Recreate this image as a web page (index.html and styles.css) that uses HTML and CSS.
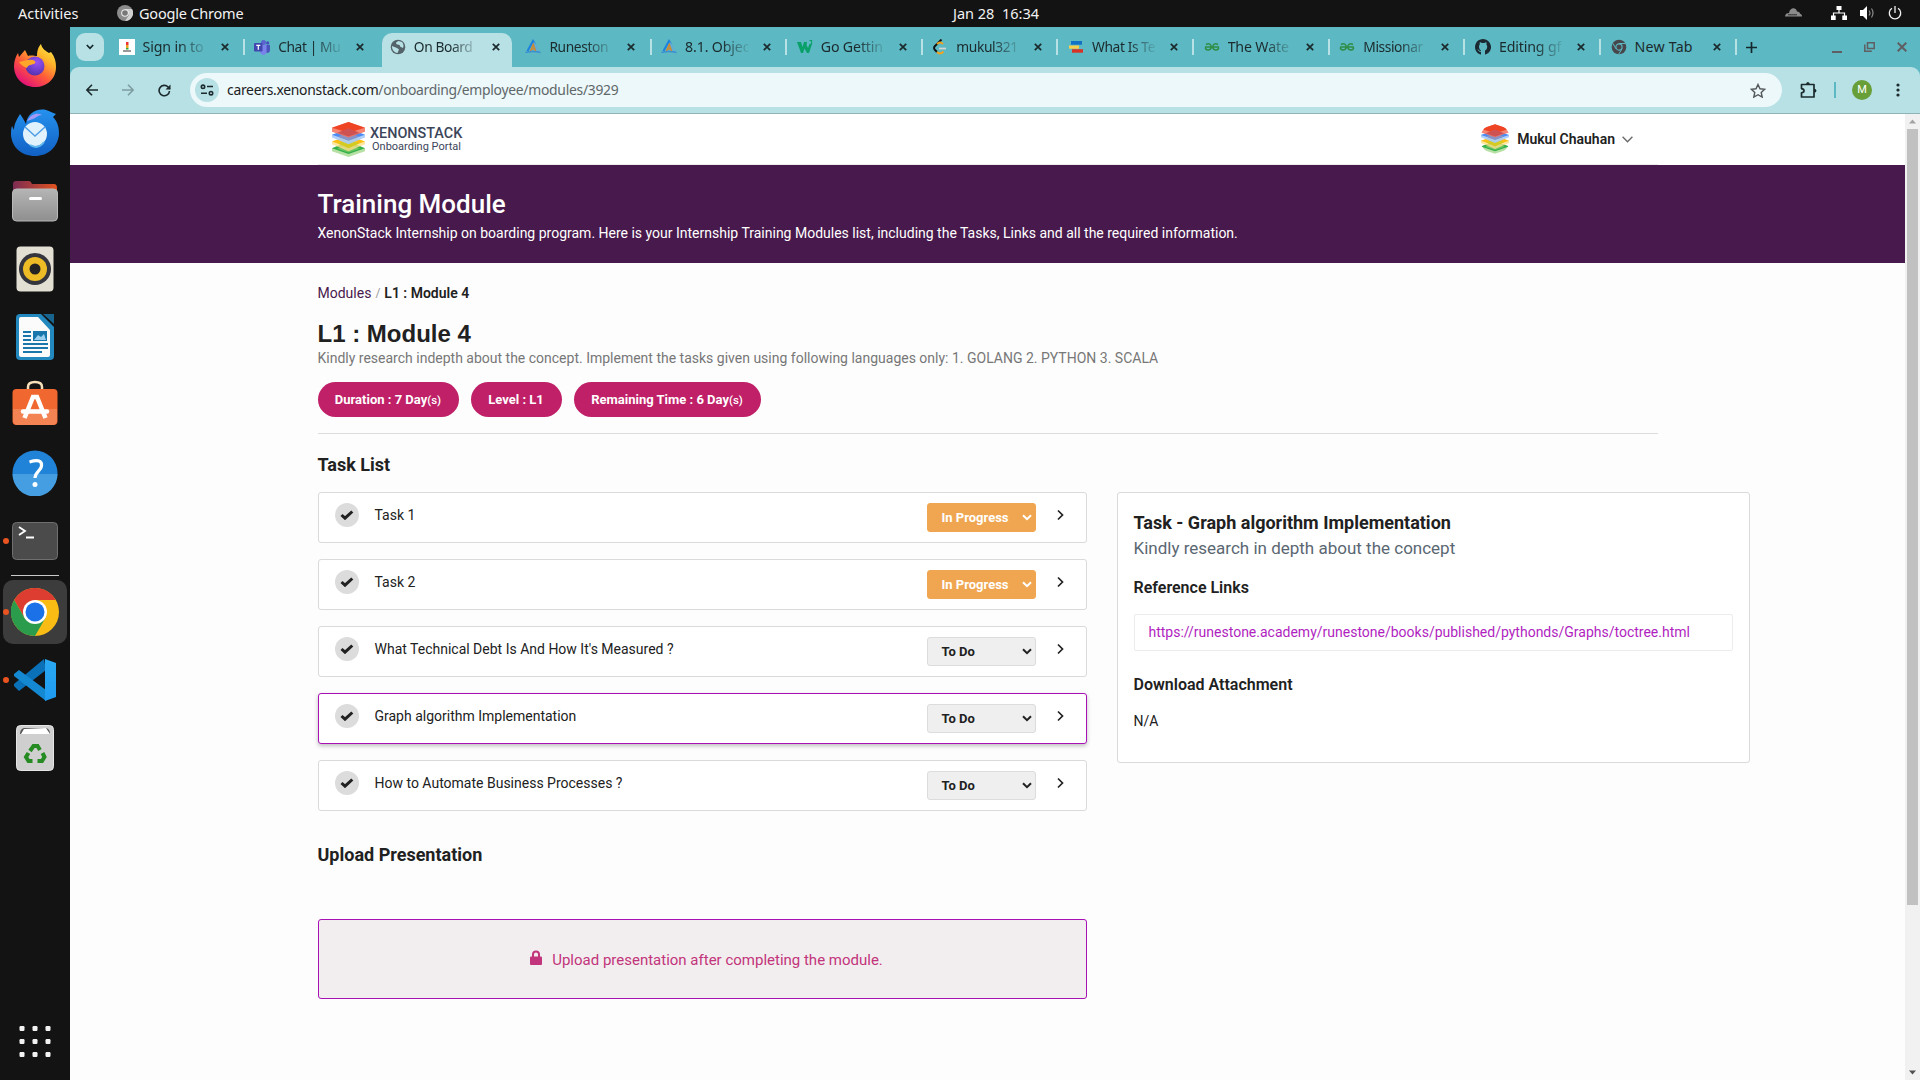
FILE: index.html
```html
<!DOCTYPE html>
<html lang="en">
<head>
<meta charset="utf-8">
<title>Onboarding Portal</title>
<link rel="stylesheet" href="styles.css">
</head>
<body>
<svg class="defs" width="0" height="0">
  <defs>
    <linearGradient id="ffo" x1="1" y1="0" x2="0.3" y2="1"><stop offset="0" stop-color="#fff44f"/><stop offset=".35" stop-color="#ffb52a"/><stop offset=".65" stop-color="#ff5a3a"/><stop offset="1" stop-color="#e2107a"/></linearGradient>
    <radialGradient id="ffp" cx=".6" cy=".3" r=".8"><stop offset="0" stop-color="#9a50f5"/><stop offset="1" stop-color="#4b2fa8"/></radialGradient>
    <linearGradient id="tb" x1="0" y1="0" x2="0" y2="1"><stop offset="0" stop-color="#2591ee"/><stop offset="1" stop-color="#1160c4"/></linearGradient>
    <linearGradient id="fol" x1="0" y1="0" x2="1" y2="0"><stop offset="0" stop-color="#7b2b53"/><stop offset="1" stop-color="#e2531f"/></linearGradient>
    <linearGradient id="grey" x1="0" y1="0" x2="0" y2="1"><stop offset="0" stop-color="#b5b5b5"/><stop offset="1" stop-color="#8f8f8f"/></linearGradient>
    <linearGradient id="vsr" x1="0" y1="0" x2="0" y2="1"><stop offset="0" stop-color="#2ba8f2"/><stop offset="1" stop-color="#1e9bf0"/></linearGradient>
    <symbol id="x" viewBox="0 0 8 8"><path d="M.8.8l6.4 6.4M7.2.8L.8 7.2" stroke="currentColor" stroke-width="1.7"/></symbol>
    <symbol id="stack" viewBox="0 0 34 36">
      <path d="M0 27l17-7 17 7v3l-17 6-17-6z" fill="#b7e0a4"/>
      <path d="M0 27l17-7 17 7-17 6z" fill="#34b04a"/><path d="M5 27.500l12-4.500 12 4.500-12 4z" fill="#6cc463"/>
      <path d="M0 20l17-6 17 6v3l-17 7-17-7z" fill="#ffe08a" opacity=".8"/><path d="M0 20l17-6 17 6-17 6z" fill="#fdbf16"/><path d="M6 22l11-4 11 4-11 5z" fill="#d4cb22"/>
      <path d="M0 13l17-6 17 6v3l-17 7-17-7z" fill="#a9ccfb" opacity=".9"/><path d="M0 13l17-6 17 6-17 6z" fill="#4b8df5"/><path d="M6 15l11-4 11 4-11 4z" fill="#8b93c4"/>
      <path d="M0 6l17-6 17 6v4l-17 6L0 10z" fill="#f4705c" opacity=".85"/><path d="M0 6l17-6 17 6-17 5z" fill="#ee4424"/><path d="M6 11l11-4.500L28 11l-11 4z" fill="#cf5252"/>
    </symbol>
    <symbol id="rune" viewBox="0 0 16 16"><path d="M2.500 12L8 2l2 3" fill="none" stroke="#1a82e0" stroke-width="2"/><path d="M9 3.500l4.500 9.500" stroke="#66a8d8" stroke-width="1.500"/><path d="M5.500 12l2.700-6.500L10.500 12M6.500 10h3" fill="none" stroke="#d08530" stroke-width="1.500"/><path d="M.5 13.500q7.500-2 15 0" fill="none" stroke="#3a8fd0" stroke-width="1.500"/></symbol>
    <symbol id="gfg" viewBox="0 0 16 16"><path d="M1 8h14M2 5.500C5 3.800 7.200 5.500 7.200 8c0 3.500-5.400 4-5.900.7M14 5.500C11 3.800 8.800 5.500 8.800 8c0 3.500 5.400 4 5.900.7" fill="none" stroke="#2f8d46" stroke-width="1.500"/></symbol>
    <symbol id="chev" viewBox="0 0 8 12"><path d="M1 1.500L5.500 6 1 10.500" fill="none" stroke="#212121" stroke-width="1.700"/></symbol>
    <symbol id="check" viewBox="0 0 14 10"><path d="M1.500 5l3.500 3.200L12.300 1.500" fill="none" stroke="#212121" stroke-width="3"/></symbol>
    <symbol id="caret" viewBox="0 0 10 7"><path d="M1 1.200l4 4 4-4" fill="none" stroke="currentColor" stroke-width="2"/></symbol>
  </defs>
</svg>

<div class="desktop">
  <header class="topbar">
    <span class="activities">Activities</span>
    <svg class="appico" width="16" height="16" viewBox="0 0 16 16"><circle cx="8" cy="8" r="8" fill="#8c8c8c"/><path d="M8 4h7a8 8 0 0 1-7 12l4-6z" fill="#d0d0d0"/><circle cx="8" cy="8" r="3.800" fill="#eee"/><circle cx="8" cy="8" r="2.800" fill="#777"/></svg>
    <span class="appname">Google Chrome</span>
    <span class="clock">Jan 28&nbsp; 16:34</span>
    <div class="tray">
      <svg width="17" height="9" viewBox="0 0 17 9"><path d="M0 8.500C0 6 2 5 4 5c1-6 7-6 8-1.500 2 0 3 1 3 2.300 1 0 2 1 2 2.700z" fill="#8b8b8b"/><path d="M3 6.800h9" stroke="#131313" stroke-width=".8"/></svg>
      <svg width="16" height="14" viewBox="0 0 16 14"><path d="M5.500 0h5v4h-5zM0 9.500h4.700V14H0zM11.300 9.500H16V14h-4.700z" fill="#fff"/><path d="M8 4v3M2.500 10V7h11v3" fill="none" stroke="#fff" stroke-width="1.200"/></svg>
      <svg width="15" height="14" viewBox="0 0 15 14"><path d="M0 4h3l4-4v14l-4-4H0z" fill="#fff"/><path d="M9 4.500q2 2.500 0 5M11.500 2.500q3 4.500 0 9" fill="none" stroke="#8b8b8b" stroke-width="1.200"/></svg>
      <svg width="14" height="14" viewBox="0 0 14 14"><path d="M4 2.300a5.700 5.700 0 1 0 6 0M7 0v7" fill="none" stroke="#f2f2f2" stroke-width="1.300"/></svg>
    </div>
  </header>

  <div class="below">
    <nav class="dock">
      <div class="slot first"><svg width="44" height="46" viewBox="0 0 44 46"><path d="M22 45C10 45 1 36 1 24c0-5 2-10 4-13l1 4 6-7 3 6c3-1 7 0 9 0 0-6 2-10 4-12 1 5 5 7 8 9l2-1c4 5 5 10 5 15C43 37 34 45 22 45z" fill="url(#ffo)"/><circle cx="22" cy="24" r="9.500" fill="url(#ffp)"/><path d="M6 20c6-1 9-3 14-2 3 1 3 3 1 4-4 1-6 1-7 4-3-1-6-3-8-6z" fill="#ffa62b"/></svg></div>
      <div class="slot"><svg width="48" height="48" viewBox="0 0 48 48"><path d="M9 5c3 4 5 8 6 10C16 5 25-1 35 1c4 1 6 3 10 4l-3 3c5 5 6 11 6 17-1 13-11 22-24 22C10 47 1 38 0 26c0-4 0-6 1-9l2 4c0-6 3-11 6-16z" fill="url(#tb)"/><path d="M16 12C20 5 26 3 31 6c-4 0-6 3-9 4z" fill="#a49af6"/><circle cx="24" cy="25" r="12" fill="#e2f2fd"/><path d="M14 18l10 9 10-9" fill="none" stroke="#4f9fe6" stroke-width="1.500"/><path d="M19 36q8 5 14-3" fill="none" stroke="#62b9ee" stroke-width="2"/></svg></div>
      <div class="slot"><svg width="46" height="42" viewBox="0 0 46 42"><path d="M1 4q0-3 3-3h13q2 0 3 3h22q3 0 3 4v8H1z" fill="url(#fol)"/><rect x=".5" y="9" width="45" height="32" rx="4" fill="url(#grey)" stroke="#b9b9b9"/><rect x="17" y="17" width="13" height="3" rx="1.500" fill="#fff"/></svg></div>
      <div class="slot"><svg width="38" height="46" viewBox="0 0 38 46"><rect x=".5" y=".5" width="37" height="45" rx="4" fill="#e3dfd3"/><circle cx="19" cy="23" r="16" fill="#34353d"/><circle cx="19" cy="23" r="12" fill="#ecbb25"/><circle cx="19" cy="23" r="5.500" fill="#232323"/></svg></div>
      <div class="slot"><svg width="38" height="46" viewBox="0 0 38 46"><path d="M4 0h21l13 13v29q0 4-4 4H4q-4 0-4-4V4q0-4 4-4z" fill="#2388bd"/><path d="M27 0h11v10z" fill="#17648f"/><path d="M5 3h17l12 13v25q0 2-2 2H5q-2 0-2-2V5q0-2 2-2z" fill="#fbfbfb"/><path d="M7 18h8M7 22h8M7 26h8M7 30h25M7 34h25M7 38h19" stroke="#1977ab" stroke-width="2"/><rect x="17" y="17" width="14" height="10" fill="#1977ab"/><path d="M18 26l4-5 3 2 3-3 2 6z" fill="#9bd1ee"/></svg></div>
      <div class="slot soft"><svg width="46" height="46" viewBox="0 0 46 46"><path d="M16 11V7q0-5 7-5t7 5v4" fill="none" stroke="#f6dfb9" stroke-width="2.500"/><rect x=".5" y="9" width="45" height="36" rx="4" fill="#f0672f"/><path d="M1 29h44v11q0 5-5 5H6q-5 0-5-5z" fill="#f48354"/><path d="M12.500 38l8.500-21h4l8.500 21" fill="none" stroke="#fff" stroke-width="4.500"/><path d="M11 31.500h24" stroke="#fff" stroke-width="4.500" stroke-linecap="round"/></svg></div>
      <div class="slot"><svg width="46" height="46" viewBox="0 0 46 46"><circle cx="23" cy="23" r="22.500" fill="#2083d8"/><path d="M.5 24h45a22.500 22.500 0 0 1-45 0z" fill="#459ee2"/><path d="M17.500 12q13-4 12 4c-.5 5-6 5-6.500 12" fill="none" stroke="#fff" stroke-width="3.200"/><circle cx="23" cy="34.500" r="2.500" fill="#fff"/></svg></div>
      <div class="slot run"><svg width="46" height="38" viewBox="0 0 46 38"><rect x=".5" y=".5" width="45" height="37" rx="4" fill="#4b4b4b" stroke="#6f6f6f"/><path d="M7 5l6 4-6 4M14 15.500h8" fill="none" stroke="#fff" stroke-width="1.800"/></svg></div>
      <div class="rule"></div>
      <div class="slot run current"><svg width="48" height="48" viewBox="0 0 48 48"><circle cx="24" cy="24" r="24" fill="#f9bc15"/><path d="M3.200 12A24 24 0 0 1 44.800 12H24L13.600 30z" fill="#dd3c31"/><path d="M3.200 12A24 24 0 0 0 24 48l10.400-18H13.600z" fill="#2a9c4b"/><circle cx="24" cy="24" r="12" fill="#fff"/><circle cx="24" cy="24" r="9.500" fill="#1b72e8"/></svg></div>
      <div class="slot run"><svg width="42" height="42" viewBox="0 0 42 42"><path d="M32 11L5 32l-5-5v-2L30 0z" fill="#0a70b7"/><path d="M0 15l5-4 27 20v11L0 17z" fill="#1489d2"/><path d="M31 0l11 4v34l-11 4z" fill="url(#vsr)"/></svg></div>
      <div class="slot"><svg width="38" height="46" viewBox="0 0 38 46"><rect x=".5" y=".5" width="37" height="45" rx="4" fill="#cfcfcf" stroke="#e6e6e6"/><path d="M4 9q0-5 4-6h22q4 1 4 6z" fill="#555"/><path d="M5 9l3-5 22-1 4 6z" fill="#fff"/><g fill="none" stroke="#258b22" stroke-width="4"><path d="M14 26l3.500-5h4l2.500 4"/><path d="M26.500 28l2 4-2.500 4h-4.500"/><path d="M16.500 36h-4L10 32l2.500-4"/></g></svg></div>
      <svg class="grid" width="32" height="32" viewBox="0 0 32 32" fill="#f2f2f2"><rect x=".5" width="5" height="5" rx="1.200"/><rect x="13.500" width="5" height="5" rx="1.200"/><rect x="26.500" width="5" height="5" rx="1.200"/><rect x=".5" y="13" width="5" height="5" rx="1.200"/><rect x="13.500" y="13" width="5" height="5" rx="1.200"/><rect x="26.500" y="13" width="5" height="5" rx="1.200"/><rect x=".5" y="26" width="5" height="5" rx="1.200"/><rect x="13.500" y="26" width="5" height="5" rx="1.200"/><rect x="26.500" y="26" width="5" height="5" rx="1.200"/></svg>
    </nav>

    <div class="browser">
      <div class="tabstrip">
        <div class="tabsearch"><svg width="8" height="6" viewBox="0 0 8 6"><path d="M.8 1L4 4.300 7.200 1" fill="none" stroke="#15282b" stroke-width="1.700"/></svg></div>
        <div class="tabs">
          <div class="tab"><svg class="fav" viewBox="0 0 16 16"><path d="M0 0h16v16H0z" fill="#fff"/><path d="M7 3h2.500v3H7z" fill="#e33"/><path d="M7 6h2.500v3H7z" fill="#eea320"/><path d="M7 9h2.500v1.500H7z" fill="#3a3"/><path d="M4 12h8" stroke="#777" stroke-width="1.500"/></svg><span class="t">Sign in to</span><svg class="x"><use href="#x"/></svg></div>
          <div class="tab"><svg class="fav" viewBox="0 0 16 16"><circle cx="9.500" cy="3.500" r="2.500" fill="#5b63d0"/><circle cx="13.700" cy="4" r="1.700" fill="#4852bd"/><path d="M6 6h7v6q-1 4-4 4-3-1-3-4z" fill="#7b83eb"/><path d="M12.500 6H16v5q0 3-3.500 3z" fill="#4b53bc"/><rect y="4" width="8.500" height="8.500" rx="1" fill="#4048b0"/><path d="M2.300 6.300h4M4.300 6.300v4.500" stroke="#fff" stroke-width="1.200"/></svg><span class="t tight">Chat | Mu</span><svg class="x"><use href="#x"/></svg></div>
          <div class="tab active"><svg class="fav" viewBox="0 0 16 16"><circle cx="8" cy="8" r="7.300" fill="#54636a"/><path d="M8.500 2c-3 1-3 3-1 3.500s3 .5 2.500 2L13 9c1-2 .5-4-1-6zM2 7l5 2 2 1.500-1.500 3.500C4 13.500 2 11 2 7z" fill="#b8e1e5"/></svg><span class="t tight">On Board</span><svg class="x"><use href="#x"/></svg></div>
          <div class="tab"><svg class="fav"><use href="#rune"/></svg><span class="t tight">Runeston</span><svg class="x"><use href="#x"/></svg></div>
          <div class="tab"><svg class="fav"><use href="#rune"/></svg><span class="t">8.1. Objec</span><svg class="x"><use href="#x"/></svg></div>
          <div class="tab"><svg class="fav" viewBox="0 0 16 16"><path d="M0 3h4l1.500 5L7 3h3l-.5 3L11 9l1.500-4H15l-3 9h-2L7.500 9.500 6 14H4z" fill="#0aa06a"/><path d="M12.500 1.500H15L14 3q1.500.5.500 2l-1.500.3" fill="none" stroke="#0aa06a"/></svg><span class="t">Go Gettin</span><svg class="x"><use href="#x"/></svg></div>
          <div class="tab"><svg class="fav" viewBox="0 0 16 16"><path d="M9.500.5L3 7q-2 2 0 4l2 2" fill="none" stroke="#111" stroke-width="1.900"/><path d="M5 5q3-3 6 0M5 13q3 3 6.500-.5" fill="none" stroke="#f3a21b" stroke-width="1.900"/><path d="M7 9.500h7" stroke="#d5d5d5" stroke-width="1.700"/></svg><span class="t tight">mukul321</span><svg class="x"><use href="#x"/></svg></div>
          <div class="tab"><svg class="fav" viewBox="0 0 16 16"><rect x="3" y="2" width="11" height="3.700" fill="#1272c5"/><rect x="1" y="6.500" width="10" height="3.200" fill="#fad04a"/><rect x="4" y="10.200" width="11" height="3.500" fill="#d83227"/></svg><span class="t tight">What Is Te</span><svg class="x"><use href="#x"/></svg></div>
          <div class="tab"><svg class="fav"><use href="#gfg"/></svg><span class="t">The Wate</span><svg class="x"><use href="#x"/></svg></div>
          <div class="tab"><svg class="fav"><use href="#gfg"/></svg><span class="t tight">Missionar</span><svg class="x"><use href="#x"/></svg></div>
          <div class="tab"><svg class="fav" viewBox="0 0 16 16"><path d="M8 0C3.600 0 0 3.600 0 8c0 3.500 2.300 6.500 5.500 7.600.4.100.5-.2.500-.4V11.500C5.200 11 4 9.700 4 7.500c0-.9.300-1.600.8-2.100-.1-.2-.4-1 .1-2.100 0 0 .7-.2 2.200.8a7.500 7.500 0 0 1 2 0c1.500-1 2.200-.8 2.200-.8.400 1.100.2 1.900.1 2.100.5.600.8 1.300.8 2.100 0 2.200-1 3.500-2.200 4v3.700c0 .2.100.5.500.4A8 8 0 0 0 8 0z" fill="#1b2a32"/><path d="M3 10.500q1 2.300 3 2.200" fill="none" stroke="#5cb8c2" stroke-width=".9"/></svg><span class="t">Editing gf</span><svg class="x"><use href="#x"/></svg></div>
          <div class="tab"><svg class="fav" viewBox="0 0 16 16"><circle cx="8" cy="8" r="7.300" fill="#47474b"/><circle cx="8" cy="8" r="3.100" fill="none" stroke="#5cb8c2" stroke-width="1.100"/><path d="M8 4.500h6.500M5 9.800L2 4.500M11 9.800l-3.300 5.500" stroke="#5cb8c2"/></svg><span class="t full">New Tab</span><svg class="x"><use href="#x"/></svg></div>
        </div>
        <svg class="plus" width="11" height="11" viewBox="0 0 11 11"><path d="M5.500 0v11M0 5.500h11" stroke="#15282b" stroke-width="1.700"/></svg>
        <div class="winbtns">
          <svg width="10" height="12" viewBox="0 0 10 12"><path d="M0 11h10" stroke="#5f5f63" stroke-width="2"/></svg>
          <svg width="11" height="10" viewBox="0 0 11 10"><path d="M3.500.8h6.700v5.700H3.500zM.8 2.500v6.700h7" fill="none" stroke="#5f5f63" stroke-width="1.500"/></svg>
          <svg width="10" height="10" viewBox="0 0 10 10"><path d="M.7.7l8.600 8.600M9.300.7L.7 9.300" stroke="#5f5f63" stroke-width="2"/></svg>
        </div>
      </div>

      <div class="toolbar">
        <svg width="12" height="12" viewBox="0 0 12 12"><path d="M6 .8L.9 6 6 11.200M1 6h11" fill="none" stroke="#1b2a2d" stroke-width="1.600"/></svg>
        <svg width="12" height="12" viewBox="0 0 12 12"><path d="M6 .8L11.100 6 6 11.200M11 6H0" fill="none" stroke="#7e9da1" stroke-width="1.600"/></svg>
        <svg width="13" height="13" viewBox="0 0 13 13"><path d="M11.500 7a5.200 5.200 0 1 1-1.400-4L12 4.800" fill="none" stroke="#1b2a2d" stroke-width="1.600"/><path d="M12.500.5v5h-5z" fill="#1b2a2d"/></svg>
        <div class="omnibox">
          <div class="site"><svg width="14" height="12" viewBox="0 0 14 12"><g fill="none" stroke="#1b2a2d" stroke-width="1.600"><circle cx="3" cy="2.800" r="1.700"/><path d="M7 2.500h6M1 9.300h6"/><circle cx="11" cy="9.200" r="1.700"/></g></svg></div>
          <span class="url">careers.xenonstack.com<span>/onboarding/employee/modules/3929</span></span>
          <svg class="star" width="16" height="15" viewBox="0 0 16 15"><path d="M8 1.500l2 4.300 4.700.5-3.500 3.200 1 4.600L8 11.700l-4.200 2.400 1-4.600L1.300 6.300 6 5.800z" fill="none" stroke="#54585a" stroke-width="1.400"/></svg>
        </div>
        <svg class="ext" width="17" height="17" viewBox="0 0 17 17"><path d="M1.500 3.500H14V16H1.500v-4.200q2.500-.3 2.500-2.100T1.500 7.600z" fill="none" stroke="#1b2a2d" stroke-width="1.700" stroke-linejoin="round"/><path d="M6 3.500q0-2.500 1.900-2.500t1.900 2.500zM14 7.800q2.500 0 2.500 1.900T14 11.600z" fill="#1b2a2d"/></svg>
        <div class="tdiv"></div>
        <div class="me">M</div>
        <svg class="dots" width="4" height="14" viewBox="0 0 4 14" fill="#1b2a2d"><circle cx="2" cy="2" r="1.600"/><circle cx="2" cy="7" r="1.600"/><circle cx="2" cy="12" r="1.600"/></svg>
      </div>

      <div class="viewport">
        <div class="page">
          <div class="sitehead">
            <svg class="logo" width="33" height="35"><use href="#stack"/></svg>
            <div class="brand"><b>XENONSTACK</b><span>Onboarding Portal</span></div>
            <div class="user"><div class="avatar"><svg width="28" height="30"><use href="#stack"/></svg></div><span>Mukul Chauhan</span><svg width="11" height="7" viewBox="0 0 11 7"><path d="M.6.700l4.900 5 4.900-5" fill="none" stroke="#6a6a6a" stroke-width="1.400"/></svg></div>
          </div>
          <div class="banner"><h2>Training Module</h2><p>XenonStack Internship on boarding program. Here is your Internship Training Modules list, including the Tasks, Links and all the required information.</p></div>
          <main>
            <div class="crumbs"><a>Modules</a><i>/</i><b>L1 : Module 4</b></div>
            <h1>L1 : Module 4</h1>
            <p class="desc">Kindly research indepth about the concept. Implement the tasks given using following languages only: 1. GOLANG 2. PYTHON 3. SCALA</p>
            <div class="pills"><span class="p1">Duration : 7 Day<small>(s)</small></span><span class="p2">Level : L1</span><span class="p3">Remaining Time : 6 Day<small>(s)</small></span></div>
            <hr>
            <h3 class="tl">Task List</h3>
            <div class="cols">
              <div class="left">
                <div class="task"><div class="ck"><svg width="14" height="10"><use href="#check"/></svg></div><span>Task 1</span><div class="sel prog">In Progress<svg width="10" height="7"><use href="#caret"/></svg></div><svg class="go"><use href="#chev"/></svg></div>
                <div class="task"><div class="ck"><svg width="14" height="10"><use href="#check"/></svg></div><span>Task 2</span><div class="sel prog">In Progress<svg width="10" height="7"><use href="#caret"/></svg></div><svg class="go"><use href="#chev"/></svg></div>
                <div class="task"><div class="ck"><svg width="14" height="10"><use href="#check"/></svg></div><span>What Technical Debt Is And How It's Measured ?</span><div class="sel">To Do<svg width="10" height="7"><use href="#caret"/></svg></div><svg class="go"><use href="#chev"/></svg></div>
                <div class="task on"><div class="ck"><svg width="14" height="10"><use href="#check"/></svg></div><span>Graph algorithm Implementation</span><div class="sel">To Do<svg width="10" height="7"><use href="#caret"/></svg></div><svg class="go"><use href="#chev"/></svg></div>
                <div class="task"><div class="ck"><svg width="14" height="10"><use href="#check"/></svg></div><span>How to Automate Business Processes ?</span><div class="sel">To Do<svg width="10" height="7"><use href="#caret"/></svg></div><svg class="go"><use href="#chev"/></svg></div>
                <h3 class="up">Upload Presentation</h3>
                <div class="upload"><svg width="12" height="15" viewBox="0 0 12 15"><path d="M3 7V4.500q0-3 3-3t3 3V7" fill="none" stroke="#c2347b" stroke-width="2"/><rect y="6.500" width="12" height="8.500" rx="1" fill="#c2347b"/></svg><span>Upload presentation after completing the module.</span></div>
              </div>
              <aside class="detail">
                <h3>Task - Graph algorithm Implementation</h3>
                <p class="sub">Kindly research in depth about the concept</p>
                <h4 class="ref">Reference Links</h4>
                <a class="link">https://runestone.academy/runestone/books/published/pythonds/Graphs/toctree.html</a>
                <h4 class="dl">Download Attachment</h4>
                <p class="na">N/A</p>
              </aside>
            </div>
          </main>
        </div>
        <div class="scroll"><svg width="15" height="15" viewBox="0 0 15 15"><path d="M4 9.500h7l-3.500-4z" fill="#a3a3a3"/></svg><div class="thumb"></div><svg class="dn" width="15" height="15" viewBox="0 0 15 15"><path d="M4 5.500h7l-3.500 4z" fill="#505050"/></svg></div>
      </div>
    </div>
  </div>
</div>
</body>
</html>
```

FILE: styles.css
```css
* { box-sizing: border-box; margin: 0; padding: 0; }
body { background: #131313; overflow: hidden; font-family: Roboto, "Liberation Sans", sans-serif; color: #212121; }
svg { display: block; flex: none; }
.defs { position: absolute; }
.desktop { width: 1920px; height: 1080px; display: flex; flex-direction: column; }

/* system bar */
.topbar { height: 27px; flex: none; display: grid; grid-template-columns: 99px 22px 814px 120px 1fr; padding: 0 0 2px 18px; align-items: center; color: #f2f2f2; font: 14.500px/24px "Noto Sans", sans-serif; white-space: nowrap; }
.appname { letter-spacing: -.2px; }
.tray { display: flex; align-items: center; justify-content: flex-end; gap: 13px; padding-right: 18px; }
.tray svg:first-child { margin-right: 16px; }

.below { flex: 1; display: flex; min-height: 0; }
.dock { width: 70px; flex: none; display: flex; flex-direction: column; padding-top: 3px; position: relative; align-items: center; }
.slot { width: 70px; height: 68px; flex: none; display: flex; align-items: center; justify-content: center; position: relative; }
.first { height: 69px; }
.soft { padding-bottom: 4px; }
.rule { width: 48px; height: 1px; background: #c9c9c9; margin: 0 0 2px; flex: none; }
.current { width: 64px; height: 64px; margin: 2px 0; background: #3c3c3c; border-radius: 10px; }
.run::before { content: ""; position: absolute; left: 3px; top: 50%; width: 6px; height: 6px; margin-top: -3px; border-radius: 50%; background: #e95420; }
.current::before { left: 0; }
.grid { margin: auto 0 22px; }

/* browser chrome */
.browser { flex: 1; display: flex; flex-direction: column; min-width: 0; background: #5cb8c2; }
.tabstrip { height: 40px; display: flex; align-items: center; flex: none; padding-left: 6px; }
.tabsearch { width: 28px; height: 28px; margin-right: 4px; border-radius: 9px; background: #b8e1e5; display: flex; align-items: center; justify-content: center; }
.tabs { display: flex; height: 40px; }
.tab { width: 135.650px; height: 40px; display: flex; align-items: center; padding-left: 10.500px; position: relative; color: #1b2a2d; }
.tab::after { content: ""; position: absolute; right: -1px; top: 12px; width: 2px; height: 16px; background: #b8e1e5; }
.tab.active::after, .tab:nth-child(2)::after { display: none; }
.active::before { content: ""; position: absolute; left: 3px; right: 3px; top: 6px; bottom: 0; background: #b8e1e5; border-radius: 10px 10px 0 0; }
.active > * { position: relative; }
.fav { width: 16px; height: 16px; margin-right: 8px; }
.t { width: 66px; height: 20px; flex: none; overflow: hidden; white-space: nowrap; font: 14.200px/20px "Noto Sans", sans-serif; letter-spacing: -.15px; -webkit-mask-image: linear-gradient(90deg, #000 55%, transparent 100%); mask-image: linear-gradient(90deg, #000 55%, transparent 100%); }
.tight { font-size: 13.800px; letter-spacing: -.4px; }
.t.full { -webkit-mask-image: none; mask-image: none; letter-spacing: .2px; }
.x { width: 8px; height: 8px; margin-left: 12px; }
.plus { margin-left: 10px; }
.winbtns { margin-left: auto; display: flex; align-items: center; gap: 22px; padding-right: 13px; }
.toolbar { height: 47px; flex: none; background: #b8e1e5; border-radius: 9px 9px 0 0; border-bottom: 1px solid #8fb3b7; display: flex; align-items: center; padding: 0 20px 0 16px; }
.toolbar > svg:nth-child(2) { margin-left: 24px; }
.toolbar > svg:nth-child(3) { margin-left: 24px; }
.omnibox { flex: none; width: 1592px; height: 34px; margin-left: 19px; border-radius: 17px; background: #ecf8f9; display: flex; align-items: center; padding-left: 5px; }
.site { width: 24px; height: 24px; border-radius: 50%; background: #b8e1e5; display: flex; align-items: center; justify-content: center; }
.url { margin-left: 8px; font: 13.900px/20px "Noto Sans", sans-serif; letter-spacing: -.28px; color: #1b2022; white-space: nowrap; }
.url span { color: #5f6769; }
.star { margin-left: auto; margin-right: 16px; }
.ext { margin-left: 18px; margin-top: -2px; }
.tdiv { width: 2px; height: 16px; background: #5cb8c2; margin: 0 16px 0 17px; }
.me { width: 20px; height: 20px; border-radius: 50%; background: #689f38; color: #fff; font-size: 11px; line-height: 20px; text-align: center; }
.dots { margin-left: 24px; }

.viewport { flex: 1; display: flex; min-height: 0; background: #fdfdfd; }
.page { flex: 1; min-width: 0; }
.scroll { width: 15px; background: #f1f1f1; display: flex; flex-direction: column; align-items: center; }
.thumb { width: 11px; height: 776px; background: #c1c1c1; }
.dn { margin-top: auto; }

/* portal header */
.sitehead { height: 51px; background: #fff; padding: 0 272px 1px 262px; display: flex; align-items: center; background-image: linear-gradient(#ececec, #ececec); background-size: 1340px 1px; background-position: 248px 50px; background-repeat: no-repeat; }
.brand { margin-left: 5px; padding-top: 1px; display: flex; flex-direction: column; color: #3b4559; }
.brand b { font-size: 14.400px; line-height: 15px; font-weight: 500; }
.brand span { font-size: 11px; line-height: 12px; padding-left: 2px; }
.user { margin-left: auto; display: flex; align-items: center; font-size: 14px; line-height: 16px; font-weight: 600; }
.avatar { width: 30px; height: 30px; border-radius: 50%; overflow: hidden; display: flex; justify-content: center; margin-right: 7px; background: #fff; }
.user > svg { margin-left: 7px; }

.banner { height: 98px; background: #48194c; color: #fff; padding: 24px 0 0 247.500px; }
.banner h2 { font-size: 26px; line-height: 30px; font-weight: 500; }
.banner p { font-size: 14px; line-height: 20px; margin-top: 4px; }

main { padding: 20px 0 0 247.500px; }
.crumbs { font-size: 14px; line-height: 20px; display: flex; }
.crumbs a { color: #48194c; }
.crumbs i { font-style: normal; font-size: 12px; color: #999; margin: 0 4px; }
.crumbs b { font-weight: 600; }
h1 { font: bold 24px/28px "Liberation Sans", sans-serif; margin-top: 17px; }
.desc { font-size: 14px; line-height: 20px; color: #777; }
.pills { display: flex; gap: 12px; margin-top: 14px; }
.pills span { height: 35px; border-radius: 18px; background: #bf2067; color: #fff; font-size: 13px; font-weight: 700; line-height: 35px; text-align: center; }
.pills small { font-size: 11.500px; font-weight: 500; }
.p1 { width: 141px; } .p2 { width: 91px; } .p3 { width: 187px; }
hr { border: 0; height: 1px; background: #dcdcdc; width: 1340px; margin-top: 16px; }
h3 { font-size: 18px; line-height: 24px; font-weight: 700; }
.tl { margin-top: 19px; }
.cols { display: flex; gap: 30px; margin-top: 15px; align-items: flex-start; }
.left { width: 769px; }
.task { height: 51px; border: 1px solid #dadada; border-radius: 3px; background: #fff; display: flex; align-items: flex-start; padding: 10px 21px 0 16px; font-size: 14px; }
.task + .task { margin-top: 16px; }
.task.on { border-color: #a811b5; box-shadow: 0 2px 4px rgba(0,0,0,.25); }
.ck { width: 24px; height: 24px; border-radius: 50%; background: #dcdcdc; display: flex; align-items: center; justify-content: center; }
.task > span { margin-left: 16px; line-height: 24px; }
.sel { margin-left: auto; width: 109px; height: 29px; border: 1px solid #dcdcdc; border-radius: 3px; background: #efefef; font-size: 13px; font-weight: 700; line-height: 28px; padding: 0 3px 0 14px; display: flex; justify-content: space-between; align-items: center; }
.prog { background: #f0a650; border-color: #f0a650; color: #fff; }
.go { width: 8px; height: 12px; margin: 6px 0 0 21px; }
.up { margin-top: 32px; }
.upload { margin-top: 52px; height: 80px; border: 1px solid #a811b5; border-radius: 3px; background: #f2eeef; display: flex; align-items: center; justify-content: center; gap: 10px; color: #c2347b; font-size: 15px; line-height: 20px; padding: 2px 0 0 9px; }
.upload svg { margin-top: -5px; }

.detail { width: 633px; height: 271px; border: 1px solid #dadada; border-radius: 3px; background: #fff; padding: 18px 16px; }
.sub { font-size: 17px; line-height: 24px; color: #5a6772; margin-top: 1px; }
h4 { font-size: 16px; line-height: 20px; font-weight: 600; }
.ref { margin-top: 18px; }
.link { display: block; height: 37px; margin-top: 16px; border: 1px solid #ececec; border-radius: 2px; padding-left: 14px; font-size: 14px; line-height: 35px; color: #b01fc0; white-space: nowrap; }
.dl { margin-top: 24px; }
.na { margin-top: 16px; font-size: 14px; line-height: 20px; }
```
